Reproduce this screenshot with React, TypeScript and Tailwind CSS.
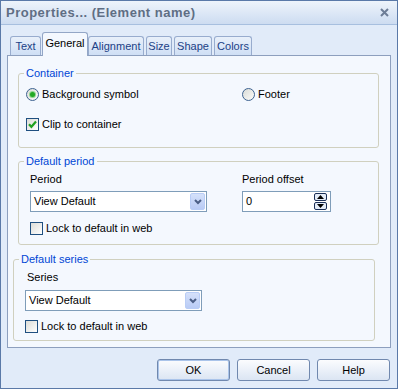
import type { ReactNode } from 'react';

const Radio = ({ checked }: { checked?: boolean }) => (
  <span className="w-[13px] h-[13px] shrink-0 rounded-full border border-[#3d6290] bg-gradient-to-br from-[#d9dbd6] to-[#fbfbf9] flex items-center justify-center">
    {checked && <span className="w-[5px] h-[5px] rounded-full bg-[#23a823] shadow-[0_0_0_1px_#8fd68f]" />}
  </span>
);

const Checkbox = ({ checked }: { checked?: boolean }) => (
  <span className="w-[13px] h-[13px] shrink-0 border border-[#1f4f80] bg-gradient-to-br from-[#dcdcd7] to-[#ffffff] flex items-center justify-center">
    {checked && (
      <svg width="9" height="9" viewBox="0 0 9 9">
        <path d="M1 4.2 L3.4 6.8 L8 1.6" stroke="#21a121" strokeWidth="2.2" fill="none" />
      </svg>
    )}
  </span>
);

const Select = ({ value }: { value: string }) => (
  <div className="w-[177px] h-[21px] border border-[#7f9db9] bg-white flex items-center pl-[3px] pr-px">
    <span className="flex-1">{value}</span>
    <span className="w-[15px] h-[17px] rounded-[2px] border border-[#b9cdf6] bg-gradient-to-b from-[#d5e1fa] to-[#b9cbf5] flex items-center justify-center">
      <svg width="8" height="6" viewBox="0 0 8 6">
        <path d="M1 1 L4 4 L7 1" stroke="#4b5e86" strokeWidth="2" fill="none" />
      </svg>
    </span>
  </div>
);

const Group = ({ title, className = '', children }: { title: string; className?: string; children: ReactNode }) => (
  <fieldset className={`border border-[#d0d0bf] rounded-[3px] px-[7px] ${className}`}>
    <legend className="px-[2px] -ml-[2px] leading-[14px] text-[#0046d5]">{title}</legend>
    {children}
  </fieldset>
);

const tabs = [
  { label: 'Text', w: 'w-[31px]' },
  { label: 'General', w: 'w-[46px]', active: true },
  { label: 'Alignment', w: 'w-[56px]' },
  { label: 'Size', w: 'w-[26px]' },
  { label: 'Shape', w: 'w-[38px]' },
  { label: 'Colors', w: 'w-[38px]' },
];

export default function App() {
  return (
    <div className="w-[398px] h-[389px] border border-[#5a79a8] bg-[#e1ebf9] flex flex-col text-[11px] text-black font-['Liberation_Sans',Arial,sans-serif]">
      {/* Title bar */}
      <div className="h-[24px] shrink-0 flex items-center justify-between pl-[5px] pr-[8px] bg-gradient-to-b from-[#eef4fb] to-[#cddcf1] border-b border-[#a7bfdf]">
        <span className="text-[13px] font-bold tracking-[0.5px] text-[#5f6e84]">Properties... (Element name)</span>
        <svg width="9" height="9" viewBox="0 0 9 9">
          <path d="M1 1 L8 8 M8 1 L1 8" stroke="#6d7d96" strokeWidth="2" />
        </svg>
      </div>

      <div className="flex-1 flex flex-col px-[6px] pt-[7px]">
        {/* Tabs */}
        <div className="flex items-end h-[24px] pl-[3px] gap-[2px] relative z-10 -mb-px">
          {tabs.map((t) =>
            t.active ? (
              <div
                key={t.label}
                className={`${t.w} h-[24px] -ml-px -mr-[2px] border border-b-0 border-[#93a6c6] rounded-t-[3px] bg-[#f4f8fe] flex items-center justify-center pb-[2px]`}
              >
                {t.label}
              </div>
            ) : (
              <div
                key={t.label}
                className={`${t.w} h-[19px] mb-px border border-b-0 border-[#98acce] rounded-t-[3px] bg-gradient-to-b from-[#e9f0fa] to-[#cfdff5] text-[#213f86] flex items-center justify-center pt-px`}
              >
                {t.label}
              </div>
            ),
          )}
        </div>

        {/* Panel */}
        <div className="h-[293px] shrink-0 border border-[#8d9fbe] bg-[#f4f8fe] pl-[10px] pr-[11px] pt-[10px]">
          <Group title="Container" className="pb-[16px]">
            <div className="mt-[7px] h-[14px] flex items-center">
              <label className="w-[216px] flex items-center gap-[3px]">
                <Radio checked />
                <span>Background symbol</span>
              </label>
              <label className="flex items-center gap-[3px]">
                <Radio />
                <span>Footer</span>
              </label>
            </div>
            <label className="mt-[16px] h-[14px] flex items-center gap-[3px]">
              <Checkbox checked />
              <span>Clip to container</span>
            </label>
          </Group>

          <Group title="Default period" className="mt-[6px] pb-[9px]">
            <div className="pl-[4px]">
              <div className="flex">
                <div className="w-[212px]">
                  <div className="mt-[4px] leading-[14px]">Period</div>
                  <div className="mt-[5px]">
                    <Select value="View Default" />
                  </div>
                </div>
                <div>
                  <div className="mt-[4px] leading-[14px]">Period offset</div>
                  <div className="mt-[5px] w-[89px] h-[21px] border border-[#7f9db9] bg-white flex items-center pl-[3px] pr-[3px]">
                    <span className="flex-1">0</span>
                    <div className="w-[13px] h-[17px] flex flex-col gap-px">
                      <span className="flex-1 border border-[#1b2f57] rounded-[2px] bg-[#e4ecf7] flex items-center justify-center">
                        <svg width="7" height="4" viewBox="0 0 7 4">
                          <path d="M0 4 L3.5 0 L7 4 Z" fill="#000" />
                        </svg>
                      </span>
                      <span className="flex-1 border border-[#1b2f57] rounded-[2px] bg-[#e4ecf7] flex items-center justify-center">
                        <svg width="7" height="4" viewBox="0 0 7 4">
                          <path d="M0 0 L3.5 4 L7 0 Z" fill="#000" />
                        </svg>
                      </span>
                    </div>
                  </div>
                </div>
              </div>
              <label className="mt-[9px] h-[14px] flex items-center gap-[3px]">
                <Checkbox />
                <span>Lock to default in web</span>
              </label>
            </div>
          </Group>

          <Group title="Default series" className="mt-[7px] -ml-[5px] mr-[4px] pb-[7px]">
            <div className="pl-[4px]">
              <div className="mt-[4px] ml-[2px] leading-[14px]">Series</div>
              <div className="mt-[6px]">
                <Select value="View Default" />
              </div>
              <label className="mt-[8px] h-[14px] flex items-center gap-[3px]">
                <Checkbox />
                <span>Lock to default in web</span>
              </label>
            </div>
          </Group>
        </div>

        {/* Buttons */}
        <div className="flex justify-end gap-[7px] pt-[11px] pr-px">
          {['OK', 'Cancel', 'Help'].map((b) => (
            <button
              key={b}
              className={`w-[73px] h-[22px] rounded-[3px] border border-[#7088ae] bg-gradient-to-b from-[#fbfcfe] to-[#dbe5f3] text-[11px] ${
                b === 'OK' ? 'shadow-[inset_0_0_0_1px_#aac4ea]' : ''
              }`}
            >
              {b}
            </button>
          ))}
        </div>
      </div>
    </div>
  );
}
